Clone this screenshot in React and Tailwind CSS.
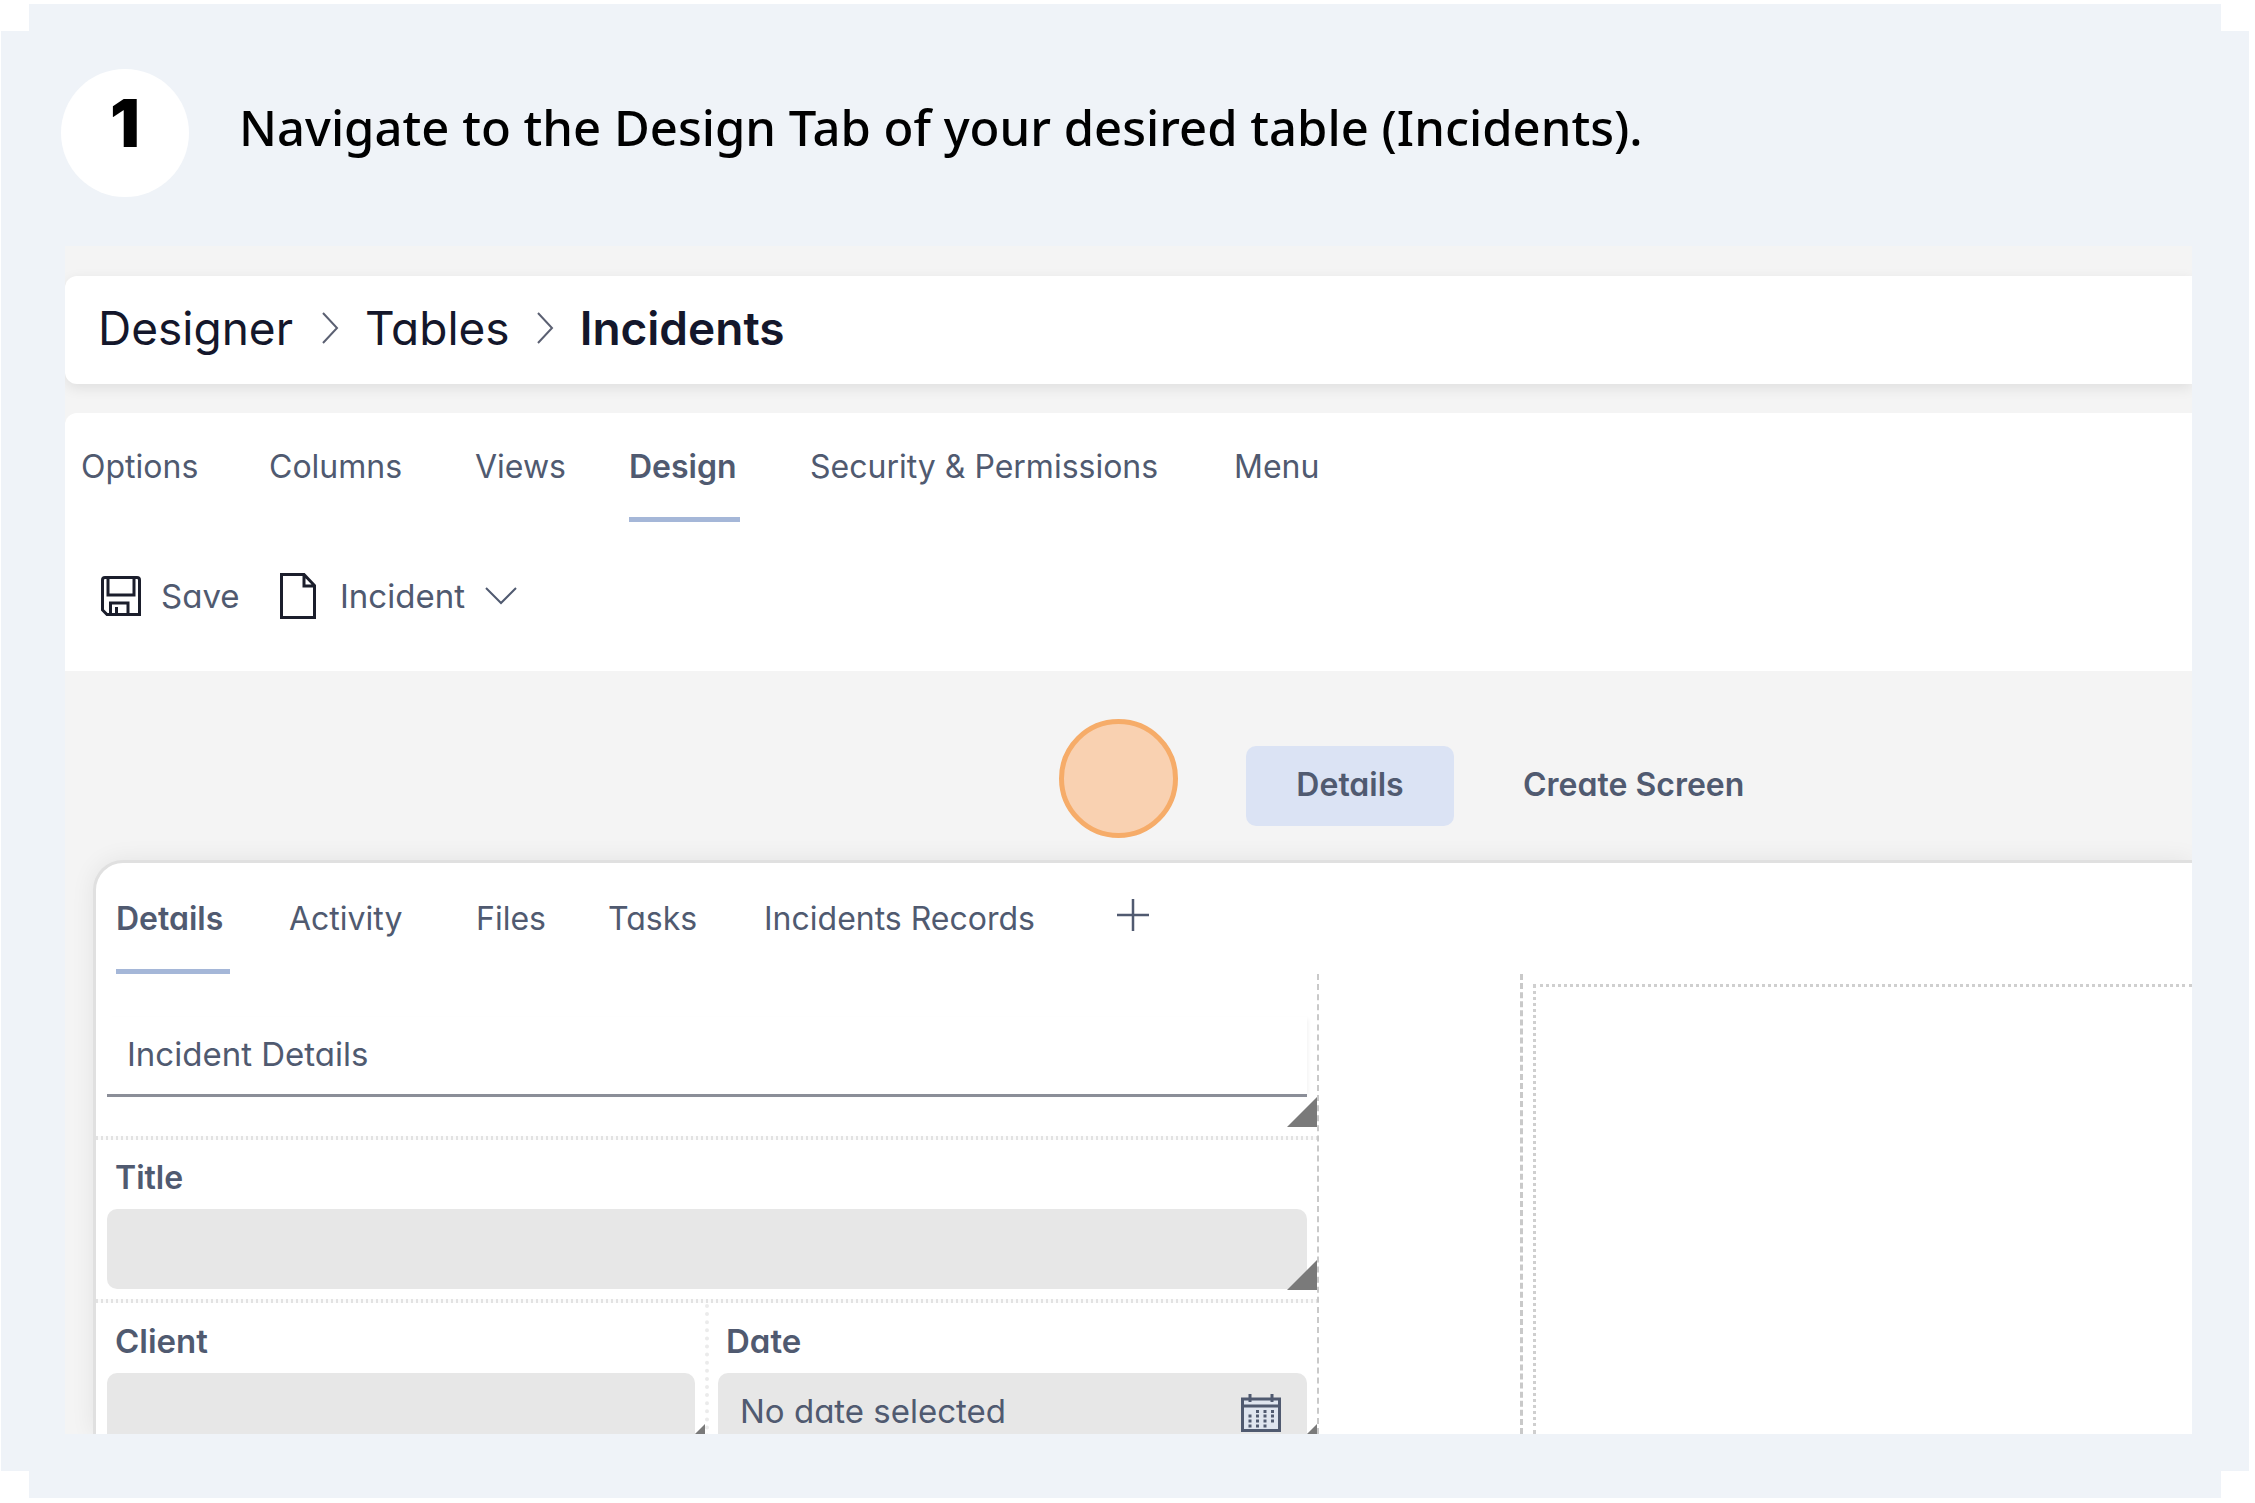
function Chevron() {
  return (
    <svg viewBox="0 0 18 32" className="h-8 w-[18px]" fill="none" stroke="#5b6072" strokeWidth="2">
      <path d="M2 1 L16 16 L2 31" />
    </svg>
  );
}

function ResizeHandle() {
  return (
    <svg viewBox="0 0 30 30" className="absolute bottom-0 right-0 size-[30px]" aria-hidden="true">
      <path d="M30 0 V30 H0 Z" fill="#7a7a7a" />
    </svg>
  );
}

function RowDivider() {
  return (
    <div className="mt-[9px] h-1 bg-[repeating-linear-gradient(90deg,#e2e2e2_0_2px,#fbfbfb_2px_5px)]" />
  );
}

function Tab({ label, active, className }) {
  return (
    <button
      type="button"
      className={`flex h-full flex-col justify-between whitespace-nowrap text-left leading-10 ${active ? "font-semibold" : ""} ${className}`}
    >
      {label}
      {active && <span className="h-[5px] w-full bg-[#a5b7d8]" />}
    </button>
  );
}

export default function App() {
  return (
    <div className="h-screen overflow-hidden bg-white pt-1 pr-[6px] pb-[5px] pl-px">
      <main className="relative flex h-full flex-col bg-[#eff3f8] pr-[57px] pb-16 pl-16">
        <span className="absolute top-0 left-0 h-[27px] w-7 bg-white" />
        <span className="absolute top-0 right-0 h-[27px] w-7 bg-white" />
        <span className="absolute bottom-0 left-0 h-[27px] w-7 bg-white" />
        <span className="absolute right-0 bottom-0 h-[27px] w-7 bg-white" />

        <header className="-ml-1 flex h-[242px] shrink-0 items-start gap-[50px] pt-[65px] text-black">
          <span className="flex size-32 shrink-0 justify-center rounded-full bg-white pt-[14px] font-['Inter',sans-serif] text-[66px] leading-[80px] font-black">
            1
          </span>
          <h1 className="pt-[22px] font-['Noto_Sans',sans-serif] text-[49px] leading-[72px] font-medium">
            Navigate to the Design Tab of your desired table (Incidents).
          </h1>
        </header>

        <section className="flex min-h-0 flex-1 flex-col overflow-hidden bg-[#f4f4f4] pt-[30px] font-['Inter',sans-serif] text-[32px] text-[#505a70] [font-feature-settings:'cv11']">
          <nav className="flex h-[108px] shrink-0 items-center rounded-l-xl bg-white pb-1 pl-[33px] text-[46px] leading-[56px] text-[#14172b] shadow-[0_4px_14px_rgba(0,0,0,0.09)]">
            <a href="#designer" className="mr-7">Designer</a>
            <Chevron />
            <a href="#tables" className="mx-[26px]">Tables</a>
            <Chevron />
            <a href="#incidents" className="ml-[26px] font-semibold">Incidents</a>
          </nav>

          <div className="mt-[29px] h-[258px] shrink-0 rounded-tl-xl bg-white">
            <div className="flex h-[109px] pt-[34px] pl-4">
              <Tab label="Options" className="w-[188px]" />
              <Tab label="Columns" className="w-[206px]" />
              <Tab label="Views" className="w-[154px]" />
              <Tab label="Design" active className="mr-[70px] w-[111px]" />
              <Tab label="Security & Permissions" className="w-[424px]" />
              <Tab label="Menu" />
            </div>
            <div className="flex items-center pt-[51px] pl-9">
              <button type="button" className="flex w-[179px] items-center gap-5 text-[33px] leading-[46px]">
                <svg viewBox="0 0 40 40" className="size-10" fill="none" stroke="#1b1e2c" strokeWidth="3">
                  <path d="M4 1.500 H36 Q38.500 1.500 38.500 4 V38.500 H6 L1.500 34 V4 Q1.500 1.500 4 1.500Z" />
                  <path d="M7 2 V19 H33 V2 M9.500 38 V27 H27 V38 M15.500 38 V31" />
                </svg>
                Save
              </button>
              <button type="button" className="flex items-center text-[33px] leading-[46px]">
                <svg viewBox="0 0 36 46" className="mr-6 h-[46px] w-9" fill="none" stroke="#1b1e2c" strokeWidth="3">
                  <path d="M1.500 1.500 H24 L34.500 12.500 V44.500 H1.500Z M24 2 V13 H34" />
                </svg>
                Incident
                <svg viewBox="0 0 32 18" className="ml-5 h-[18px] w-8" fill="none" stroke="#505a70" strokeWidth="2">
                  <path d="M1 1 L16 16 L31 1" />
                </svg>
              </button>
            </div>
          </div>

          <div className="flex h-[189px] shrink-0 items-start pt-12 pl-[994px] font-semibold">
            <span className="mr-[68px] size-[119px] shrink-0 rounded-full border-5 border-[#f6ac69] bg-[#f9d1b1]" />
            <button type="button" className="mt-[27px] h-20 w-[208px] rounded-[10px] bg-[#dbe3f4] pb-0.5">Details</button>
            <button type="button" className="mt-[27px] ml-[69px] h-20 pb-0.5 whitespace-nowrap">Create Screen</button>
          </div>

          <div className="ml-7 flex min-h-0 flex-1 flex-col rounded-tl-[30px] border-t-[3px] border-l-[3px] border-[#e0e0e0] bg-white shadow-[0_0_24px_rgba(0,0,0,0.07)]">
            <div className="flex h-[111px] shrink-0 pt-9 pl-5">
              <Tab label="Details" active className="mr-[59px] w-[114px]" />
              <Tab label="Activity" className="w-[187px]" />
              <Tab label="Files" className="w-[132px]" />
              <Tab label="Tasks" className="w-[156px]" />
              <Tab label="Incidents Records" className="w-[353px]" />
              <button type="button" aria-label="Add tab" className="-mt-1 h-10">
                <svg viewBox="0 0 32 32" className="size-8" stroke="#505a70" strokeWidth="2.500">
                  <path d="M16 0 V32 M0 16 H32" />
                </svg>
              </button>
            </div>

            <div className="flex min-h-0 flex-1 overflow-hidden">
              <form className="w-[1223px] shrink-0 border-r-2 border-dashed border-[#c9c9c9] text-[33px]">
                <div className="relative h-[153px] pt-[43px] pr-[10px] pl-[11px]">
                  <input
                    aria-label="Section name"
                    defaultValue="Incident Details"
                    className="h-20 w-full border-b-[3px] border-[#8b8e98] pb-1 pl-5 shadow-[3px_0_4px_-2px_rgba(0,0,0,0.06)] outline-none"
                  />
                  <ResizeHandle />
                </div>
                <RowDivider />
                <div className="relative h-[150px] pr-[10px] pl-[11px]">
                  <label htmlFor="title" className="block h-[69px] pt-[18px] pl-2 text-[32px] leading-10 font-semibold">Title</label>
                  <input id="title" className="h-20 w-full rounded-[10px] bg-[#e7e7e7] px-6 outline-none" />
                  <ResizeHandle />
                </div>
                <RowDivider />
                <div className="flex pt-px">
                  <div className="relative h-[150px] w-[613px] shrink-0 border-r-4 border-dotted border-[#ebebeb] pr-[10px] pl-[11px]">
                    <label htmlFor="client" className="block h-[69px] pt-[17px] pl-2 leading-10 font-semibold">Client</label>
                    <input id="client" className="h-20 w-full rounded-[10px] bg-[#e7e7e7] px-6 outline-none" />
                    <ResizeHandle />
                  </div>
                  <div className="relative h-[150px] min-w-0 flex-1 pr-[10px] pl-[9px]">
                    <label htmlFor="date" className="block h-[69px] pt-[17px] pl-2 leading-10 font-semibold">Date</label>
                    <div className="flex h-20 items-center rounded-[10px] bg-[#e7e7e7] pr-[26px] pl-[22px]">
                      <input id="date" placeholder="No date selected" className="min-w-0 flex-1 pb-0.5 outline-none placeholder:text-[#505a70]" />
                      <svg viewBox="0 0 40 38" className="h-[38px] w-10" fill="none" stroke="#505a70" strokeWidth="3">
                        <path d="M1.500 5 H38.500 V36.500 H1.500Z" fill="#dfe5ef" />
                        <path d="M1.500 12 H38.500 M9 0 V8 M31 0 V8" />
                        <path d="M15 17.500 H33 M7.500 22 H33 M7.500 27 H33 M7.500 32 H26" strokeDasharray="3 4.500" />
                      </svg>
                    </div>
                    <ResizeHandle />
                  </div>
                </div>
              </form>
              <div className="ml-[201px] min-w-0 flex-1 border-l-[3px] border-dashed border-[#c9c9c9] pt-[10px] pl-[10px]">
                <div className="h-full border-t-[3px] border-l-[3px] border-dotted border-[#cfcfcf]" />
              </div>
            </div>
          </div>
        </section>
      </main>
    </div>
  );
}
